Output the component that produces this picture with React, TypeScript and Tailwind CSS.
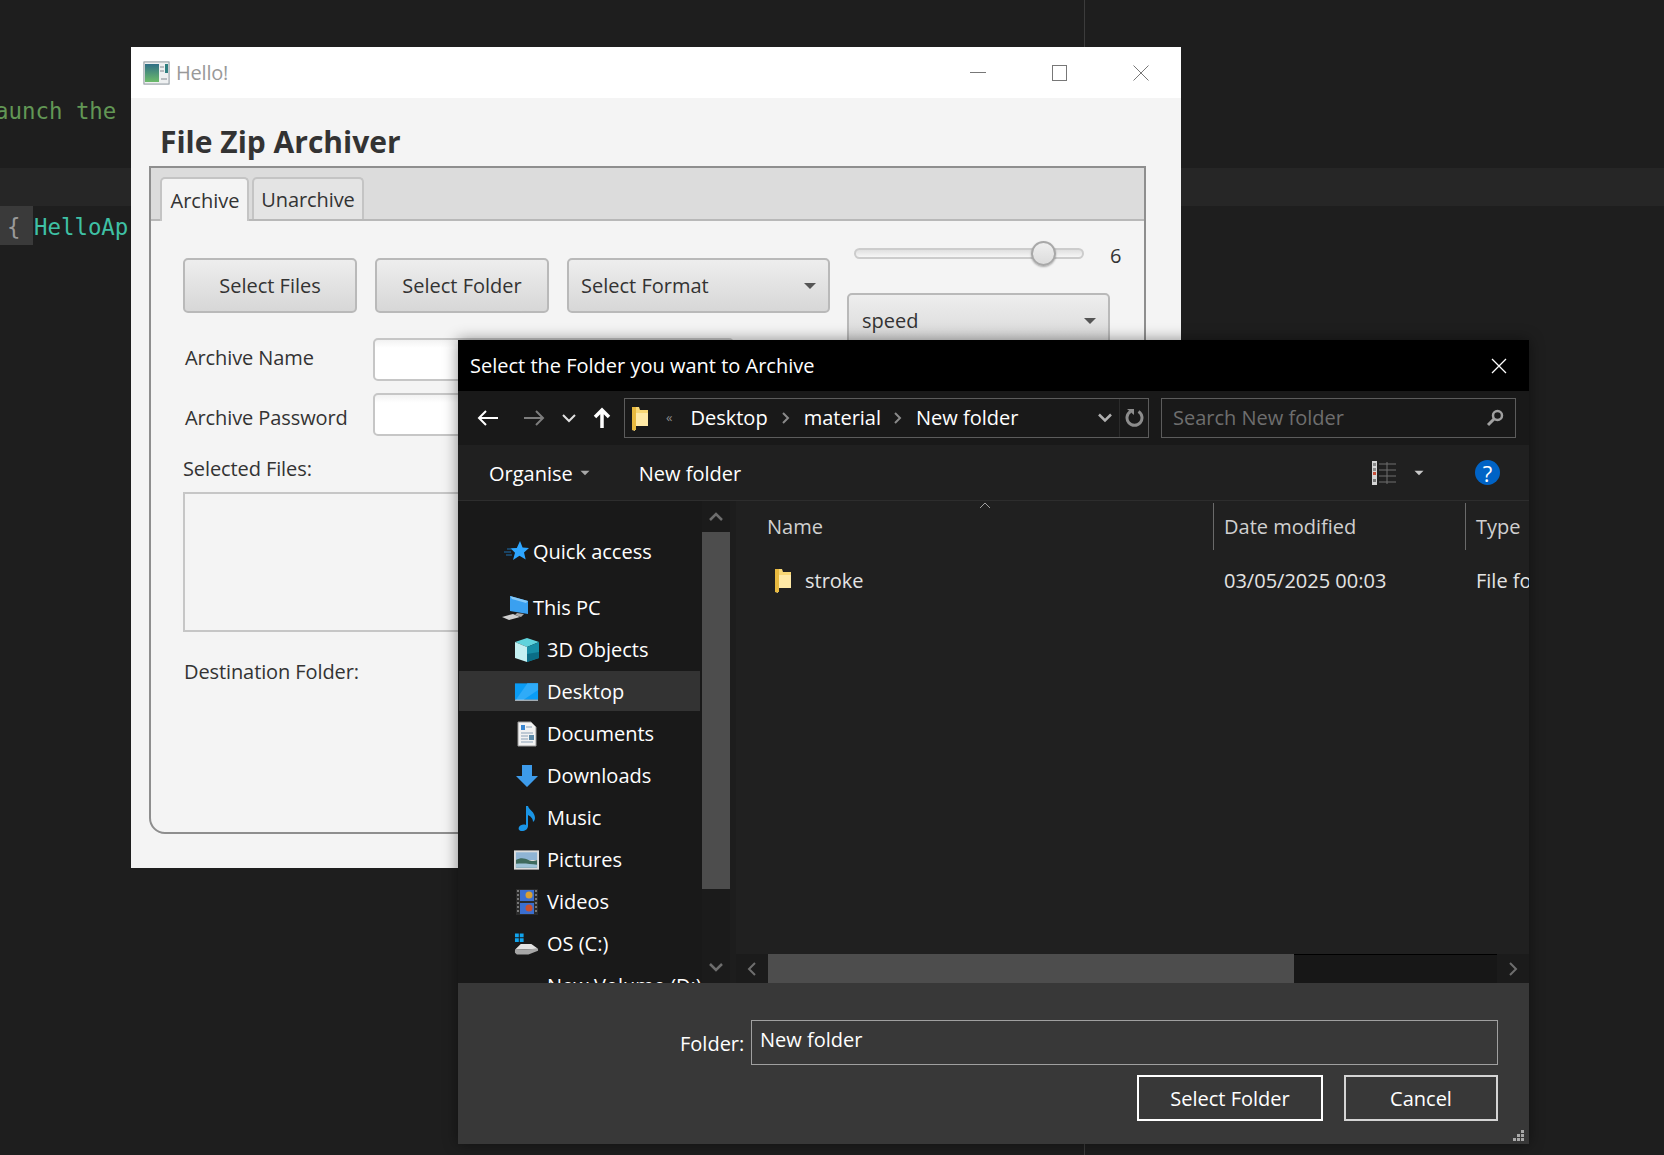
import React from 'react';

const FolderIcon = () => (
  <svg width="18" height="26" viewBox="0 0 18 26">
    <path d="M1 1h7l1 3h8v16H5l-1 1v4l-3-1z" fill="#f8d775" />
    <path d="M5 7h12v13H5z" fill="#ffe9a6" />
    <path d="M1 1h4v23H1z" fill="#e8b93f" />
  </svg>
);

const StarIcon = () => (
  <svg width="26" height="24" viewBox="0 0 26 24">
    <path d="M17 1l2.600 6.600 6.400.4-5 4.600 1.700 7-6.200-3.800L10 20l2-7.200-4.500-4.600 6.300-.3z" fill="#2ea6ff" />
    <path d="M1 12h7M3 15h6M4 9h5" stroke="#1c6fae" strokeWidth="1" />
  </svg>
);

const PcIcon = () => (
  <svg width="28" height="26" viewBox="0 0 28 26">
    <path d="M9 1l18 5v13l-18-3z" fill="#3aa0f0" />
    <path d="M9 1l18 5-2 2-14-4z" fill="#86c9f8" />
    <path d="M1 22l11-3 7 3-11 3z" fill="#d0d0d0" />
    <path d="M16 18l7 1-3 3-6-2z" fill="#a8a8a8" />
  </svg>
);

const CubeIcon = () => (
  <svg width="26" height="26" viewBox="0 0 26 26">
    <path d="M13 1l12 4-12 5L1 5z" fill="#5fd3dc" />
    <path d="M1 5l12 5v15L1 21z" fill="#c4f0f2" />
    <path d="M25 5l-12 5v15l12-4z" fill="#178ea6" />
    <path d="M13 17l12-2v6l-12 4z" fill="#0b6d86" />
  </svg>
);

const DesktopIcon = () => (
  <svg width="26" height="20" viewBox="0 0 26 20">
    <path d="M1 1h24v17H1z" fill="#0a9cf5" />
    <path d="M14 1h11v7L10 18H2z" fill="#2fabf8" />
    <path d="M1 18h24v1H1z" fill="#dfeefb" />
  </svg>
);

const DocIcon = () => (
  <svg width="20" height="26" viewBox="0 0 20 26">
    <path d="M1 1h13l5 5v19H1z" fill="#f2f2f2" stroke="#9a9a9a" />
    <path d="M4 4h4v5H4z" fill="#3a86d0" />
    <path d="M9 6h6M4 12h12M4 15h7M4 18h7M4 21h12" stroke="#8aa0b6" />
    <path d="M12 14h5v5h-5z" fill="#5b89a8" />
  </svg>
);

const DownloadIcon = () => (
  <svg width="24" height="24" viewBox="0 0 24 24">
    <path d="M7 1h10v11h6L12 23 1 12h6z" fill="#3d9bea" />
  </svg>
);

const MusicIcon = () => (
  <svg width="18" height="26" viewBox="0 0 18 26">
    <path d="M8 1h2c1 4 7 6 7 12 0 2-1 3-2 4 0-4-3-6-5-7v11c0 3-3 5-6 5-3 0-4-2-3-4 1-2 4-3 7-2z" fill="#1a95e6" />
  </svg>
);

const PictureIcon = () => (
  <svg width="26" height="20" viewBox="0 0 26 20">
    <path d="M0 0h26v20H0z" fill="#dcdcdc" />
    <path d="M2 2h22v8H2z" fill="#8fb4d4" />
    <path d="M2 10c5-3 9-2 13 0s6 1 9 0v8H2z" fill="#3e6a5c" />
    <path d="M2 14c8-1 14 0 22 1v3H2z" fill="#9ec3d8" />
  </svg>
);

const VideoIcon = () => (
  <svg width="22" height="26" viewBox="0 0 22 26">
    <path d="M0 0h22v26H0z" fill="#2b2b2b" />
    <path d="M4 1h14v11H4z" fill="#3b6fd0" />
    <path d="M4 14h14v11H4z" fill="#3b6fd0" />
    <circle cx="13" cy="6" r="3.500" fill="#d9a032" />
    <circle cx="13" cy="19" r="3.500" fill="#c9502f" />
    <path d="M1 2h2M1 6h2M1 10h2M1 14h2M1 18h2M1 22h2M19 2h2M19 6h2M19 10h2M19 14h2M19 18h2M19 22h2" stroke="#777" strokeWidth="2" />
  </svg>
);

const DriveIcon = () => (
  <svg width="26" height="24" viewBox="0 0 26 24">
    <path d="M1 1h4v4H1zM6 1h4v4H6zM1 6h4v4H1zM6 6h4v4H6z" fill="#10a4ee" />
    <path d="M1 18l6-6h11l7 5z" fill="#e2e2e2" />
    <path d="M1 18l24-1v2l-10 4H3l-2-2z" fill="#a6a6a6" />
  </svg>
);

const WindowIcon = () => (
  <svg width="27" height="24" viewBox="0 0 27 24">
    <path d="M0 0h27v24H0z" fill="#d9dde0" />
    <path d="M1 1h25v22H1z" fill="#eef0f1" stroke="#9ba3a8" />
    <defs>
      <linearGradient id="winfill" x1="0" y1="0" x2="0" y2="1">
        <stop offset="0" stopColor="#2f6f86" />
        <stop offset="1" stopColor="#6dbb6a" />
      </linearGradient>
    </defs>
    <path d="M2 3h14v18H2z" fill="url(#winfill)" />
    <path d="M22 3h3v9h-3z" fill="#2f7f80" />
    <path d="M17 6h4M17 10h4M18 18h6" stroke="#b8bcc0" strokeWidth="2" />
  </svg>
);

const Caret = ({ className }: { className: string }) => (
  <div className={`w-0 h-0 border-x-[6px] border-x-transparent border-t-[6px] ${className}`} />
);

const sidebarItems = [
  { label: 'Desktop', icon: <DesktopIcon />, active: true },
  { label: 'Documents', icon: <DocIcon /> },
  { label: 'Downloads', icon: <DownloadIcon /> },
  { label: 'Music', icon: <MusicIcon /> },
  { label: 'Pictures', icon: <PictureIcon /> },
  { label: 'Videos', icon: <VideoIcon /> },
  { label: 'OS (C:)', icon: <DriveIcon /> },
];

const fxButton =
  'h-[55px] pt-[1px] flex items-center rounded-[5px] border-2 border-[#b9b9b9] bg-linear-to-b from-[#eeeeee] to-[#d7d7d7] text-[20px] text-[#333333]';

const fxInput = 'h-[43px] w-[361px] rounded-[5px] border-2 border-[#c6c6c6] bg-linear-to-b from-[#f2f2f2] to-white to-20%';

const ArchiverWindow = () => (
  <div className="absolute left-[131px] top-[47px] w-[1050px] h-[821px] flex flex-col bg-[#f4f4f4] text-[#333333]">
    <div className="h-[51px] shrink-0 bg-white flex items-center pl-[12px]">
      <WindowIcon />
      <span className="ml-[6px] pt-[1px] text-[20px] tracking-[-0.2px] text-[#999999]">Hello!</span>
      <div className="ml-auto flex items-center mr-[32px] gap-[66px]">
        <div className="w-[16px] h-px bg-[#777777]" />
        <div className="w-[15px] h-[16px] border border-[#777777]" />
        <svg width="16" height="16" viewBox="0 0 16 16">
          <path d="M.5.5l15 15M15.500.5l-15 15" stroke="#777777" strokeWidth="1" />
        </svg>
      </div>
    </div>
    <h1 className="ml-[29px] mt-[24px] h-[44px] leading-[40px] text-[30px] font-bold text-[#333333]">
      File Zip Archiver
    </h1>
    <div className="ml-[18px] w-[997px] h-[668px] border-2 border-[#8e8e8e] rounded-bl-[16px] overflow-hidden">
      <div className="h-[53px] bg-[#dcdcdc] border-b-2 border-[#b8b8b8] flex items-end pl-[9px] gap-[3px]">
        <div className="w-[89px] h-[44px] -mb-[2px] pt-[2px] bg-[#f4f4f4] border-2 border-b-0 border-[#c4c4c4] rounded-t-[5px] flex items-center justify-center text-[20px]">
          <span className="ml-[1px]">Archive</span>
        </div>
        <div className="w-[112px] h-[42px] pt-[2px] bg-[#e4e4e4] border-2 border-b-0 border-[#c4c4c4] rounded-t-[5px] flex items-center justify-center text-[20px] tracking-[-0.1px]">
          Unarchive
        </div>
      </div>
      <div className="h-[117px] flex items-start">
        <div className="mt-[37px] ml-[32px] flex gap-[18px]">
          <div className={`${fxButton} w-[174px] justify-center`}>Select Files</div>
          <div className={`${fxButton} w-[174px] justify-center`}>Select Folder</div>
          <div className={`${fxButton} w-[263px] justify-between pl-[12px] pr-[12px]`}>
            <span>Select Format</span>
            <Caret className="border-t-[#555555]" />
          </div>
        </div>
        <div className="ml-[17px] mt-[18px] w-[278px]">
          <div className="flex items-center h-[36px]">
            <div className="relative -mt-[8px] ml-[7px] w-[230px] h-[11px] rounded-full border-2 border-[#cccccc] bg-linear-to-b from-[#e0e0e0] to-[#f6f6f6]">
              <div className="absolute left-[175px] -top-[9px] w-[25px] h-[25px] rounded-full border-2 border-[#a8a8a8] bg-linear-to-b from-[#efefef] to-[#dcdcdc] shadow-[0_1px_2px_rgba(0,0,0,0.3)]" />
            </div>
            <span className="ml-[26px] -mt-[2px] text-[20px]">6</span>
          </div>
          <div className={`${fxButton} w-[263px] justify-between pl-[13px] pr-[12px] mt-[18px]`}>
            <span>speed</span>
            <Caret className="border-t-[#555555]" />
          </div>
        </div>
      </div>
      <div className="flex items-center h-[43px] pl-[34px] text-[20px] tracking-[-0.1px]">
        <span className="w-[188px] pb-[4px]">Archive Name</span>
        <div className={fxInput} />
      </div>
      <div className="flex items-center h-[43px] mt-[12px] pl-[34px] text-[20px] tracking-[-0.1px]">
        <span className="w-[188px] pt-[6px]">Archive Password</span>
        <div className={fxInput} />
      </div>
      <div className="ml-[32px] mt-[18px] h-[38px] text-[20px] tracking-[-0.1px]">Selected Files:</div>
      <div className="ml-[32px] w-[780px] h-[140px] border-2 border-[#c6c6c6]" />
      <div className="ml-[33px] mt-[25px] text-[20px] tracking-[-0.1px]">Destination Folder:</div>
    </div>
  </div>
);

const FolderDialog = () => (
  <div className="absolute left-[458px] top-[340px] w-[1071px] h-[804px] flex flex-col overflow-hidden bg-[#202020] text-white text-[20px] shadow-[0_0_14px_rgba(0,0,0,0.45)]">
    <div className="h-[51px] shrink-0 bg-black flex items-center pl-[12px] pr-[22px]">
      <span>Select the Folder you want to Archive</span>
      <svg className="ml-auto" width="16" height="16" viewBox="0 0 16 16">
        <path d="M1 1l14 14M15 1L1 15" stroke="#ffffff" strokeWidth="1.300" />
      </svg>
    </div>
    <div className="h-[54px] shrink-0 bg-[#191919] flex items-center">
      <svg className="ml-[19px]" width="22" height="18" viewBox="0 0 22 18">
        <path d="M21 9H2M9 2L2 9l7 7" fill="none" stroke="#ffffff" strokeWidth="2" />
      </svg>
      <svg className="ml-[24px]" width="22" height="18" viewBox="0 0 22 18">
        <path d="M1 9h19M13 2l7 7-7 7" fill="none" stroke="#7d7d7d" strokeWidth="2" />
      </svg>
      <svg className="ml-[17px]" width="14" height="10" viewBox="0 0 14 10">
        <path d="M1 2l6 6 6-6" fill="none" stroke="#e0e0e0" strokeWidth="2" />
      </svg>
      <svg className="ml-[17px]" width="18" height="22" viewBox="0 0 18 22">
        <path d="M9 21V3M2 10l7-7 7 7" fill="none" stroke="#ffffff" strokeWidth="3.500" />
      </svg>
      <div className="ml-[13px] w-[525px] h-[40px] border border-[#5c5c5c] flex items-center">
        <div className="ml-[6px] mt-[1px] flex"><FolderIcon /></div>
        <span className="ml-[17px] text-[13px] text-[#8a8a8a]">«</span>
        <span className="ml-[18px]">Desktop</span>
        <svg className="ml-[14px]" width="8" height="12" viewBox="0 0 8 12">
          <path d="M1 1l5 5-5 5" fill="none" stroke="#8a8a8a" strokeWidth="2" />
        </svg>
        <span className="ml-[14px]">material</span>
        <svg className="ml-[13px]" width="8" height="12" viewBox="0 0 8 12">
          <path d="M1 1l5 5-5 5" fill="none" stroke="#8a8a8a" strokeWidth="2" />
        </svg>
        <span className="ml-[14px]">New folder</span>
        <svg className="ml-auto" width="14" height="10" viewBox="0 0 14 10">
          <path d="M1 1.500l6 6 6-6" fill="none" stroke="#b0b0b0" strokeWidth="2.500" />
        </svg>
        <div className="ml-[7px] w-px h-full bg-[#2b2b2b]" />
        <svg className="ml-[5px] mr-[4px]" width="19" height="20" viewBox="0 0 19 20">
          <path d="M5.500 3.500a7.500 7.500 0 1 0 8 0" fill="none" stroke="#8c8c8c" strokeWidth="3" />
          <path d="M2 1h7v6z" fill="#8c8c8c" />
        </svg>
      </div>
      <div className="ml-[12px] w-[355px] h-[40px] border border-[#5c5c5c] flex items-center pl-[11px] pr-[11px] text-[#6e6e6e]">
        <span>Search New folder</span>
        <svg className="ml-auto" width="18" height="18" viewBox="0 0 18 18">
          <circle cx="11.500" cy="6.500" r="4.500" fill="none" stroke="#a0a0a0" strokeWidth="2.500" />
          <path d="M8 10l-6 6" stroke="#a0a0a0" strokeWidth="3" />
        </svg>
      </div>
    </div>
    <div className="h-[56px] shrink-0 bg-[#202020] border-b border-[#2d2d2d] flex items-center">
      <span className="ml-[31px] pt-[2px]">Organise</span>
      <Caret className="ml-[6px] scale-75 border-t-[#a8a8a8]" />
      <span className="ml-[48px] pt-[2px]">New folder</span>
      <svg className="ml-auto" width="25" height="24" viewBox="0 0 25 24">
        <path d="M0 0h5v24H0z" fill="#d5d5d5" />
        <path d="M1 2h3v3H1zM1 7h3v3H1z" fill="#8a8a8a" />
        <path d="M1 11h3v3H1z" fill="#c8503a" />
        <path d="M1 18h3v3H1z" fill="#777777" />
        <path d="M7 3h17M7 9h17M7 15h17M7 21h17M15 1v22" stroke="#6f6f6f" strokeWidth="1" />
      </svg>
      <Caret className="ml-[16px] scale-75 border-t-[#c8c8c8]" />
      <div className="ml-[50px] mr-[29px] w-[25px] h-[25px] rounded-full bg-[#0063c6] flex items-center justify-center text-[22px] leading-none">
        ?
      </div>
    </div>
    <div className="flex-1 min-h-0 flex">
      <div className="w-[272px] shrink-0 bg-[#191919] flex overflow-hidden">
        <div className="w-[242px] shrink-0 mr-[2px] pt-[30px] pl-[1px]">
          <div className="h-[40px] pt-[2px] flex items-center pl-[45px]">
            <div className="w-[30px] -ml-[1px] flex"><StarIcon /></div>
            <span>Quick access</span>
          </div>
          <div className="mt-[16px] h-[40px] pt-[2px] flex items-center pl-[42px]">
            <div className="w-[32px] flex"><PcIcon /></div>
            <span>This PC</span>
          </div>
          <div className="mt-[2px] h-[40px] pt-[2px] flex items-center pl-[55px]">
            <div className="w-[33px] flex"><CubeIcon /></div>
            <span>3D Objects</span>
          </div>
          {sidebarItems.map((item) => (
            <div
              key={item.label}
              className={`mt-[2px] h-[40px] pt-[2px] flex items-center pl-[55px] ${item.active ? 'bg-[#333333]' : ''}`}
            >
              <div className="w-[33px] flex justify-center pr-[8px]">{item.icon}</div>
              <span>{item.label}</span>
            </div>
          ))}
          <div className="mt-[2px] h-[40px] pt-[2px] flex items-center pl-[88px] whitespace-nowrap">New Volume (D:)</div>
        </div>
        <div className="w-[28px] shrink-0 flex flex-col items-center bg-[#1b1b1b]">
          <svg className="mt-[11px]" width="14" height="10" viewBox="0 0 14 10">
            <path d="M1 8l6-6 6 6" fill="none" stroke="#6e6e6e" strokeWidth="2.500" />
          </svg>
          <div className="mt-[10px] w-full h-[357px] bg-[#4d4d4d]" />
          <svg className="mt-[73px]" width="14" height="10" viewBox="0 0 14 10">
            <path d="M1 2l6 6 6-6" fill="none" stroke="#6e6e6e" strokeWidth="2.500" />
          </svg>
        </div>
      </div>
      <div className="w-[6px] shrink-0 bg-[#1d1d1d]" />
      <div className="flex-1 min-w-0 flex flex-col overflow-hidden">
        <div className="flex-1 min-h-0 text-[#e4e4e4]">
          <div className="relative h-[49px] pt-[2px] flex text-[#d0d0d0]">
            <svg className="absolute left-[243px] top-[1px]" width="12" height="7" viewBox="0 0 12 7">
              <path d="M1 6l5-5 5 5" fill="none" stroke="#a0a0a0" strokeWidth="1" />
            </svg>
            <div className="w-[478px] shrink-0 pl-[31px] flex items-center border-r border-[#6a6a6a]">Name</div>
            <div className="w-[252px] shrink-0 pl-[10px] flex items-center border-r border-[#6a6a6a]">Date modified</div>
            <div className="pl-[10px] flex items-center">Type</div>
          </div>
          <div className="mt-[16px] h-[29px] flex items-center whitespace-nowrap">
            <div className="w-[478px] shrink-0 pl-[38px] flex items-center">
              <FolderIcon />
              <span className="ml-[13px]">stroke</span>
            </div>
            <div className="w-[252px] shrink-0 pl-[10px]">03/05/2025 00:03</div>
            <div className="pl-[10px]">File folder</div>
          </div>
        </div>
        <div className="h-[29px] shrink-0 flex items-center bg-[#1b1b1b]">
          <svg className="ml-[11px]" width="10" height="14" viewBox="0 0 10 14">
            <path d="M8 1L2 7l6 6" fill="none" stroke="#6e6e6e" strokeWidth="2" />
          </svg>
          <div className="ml-[11px] w-[526px] h-full bg-[#4d4d4d]" />
          <div className="flex-1 h-full bg-[#171717] border-t border-black" />
          <svg className="mx-[11px]" width="10" height="14" viewBox="0 0 10 14">
            <path d="M2 1l6 6-6 6" fill="none" stroke="#6e6e6e" strokeWidth="2" />
          </svg>
        </div>
      </div>
    </div>
    <div className="relative h-[161px] shrink-0 bg-[#383838]">
      <div className="flex items-start pt-[37px] pr-[31px] pl-[222px]">
        <span className="mt-[9px] w-[71px]">Folder:</span>
        <div className="flex-1 h-[45px] border border-[#a0a0a0] pl-[8px] pt-[4px]">New folder</div>
      </div>
      <div className="flex justify-end gap-[21px] pr-[31px] mt-[10px]">
        <div className="w-[186px] h-[46px] pt-[2px] border-2 border-white flex items-center justify-center">Select Folder</div>
        <div className="w-[154px] h-[46px] pt-[2px] border-2 border-[#d4d4d4] flex items-center justify-center">Cancel</div>
      </div>
      <svg className="absolute right-[4px] bottom-[2px]" width="12" height="12" viewBox="0 0 12 12">
        <path d="M8 0h3v3H8zM4 4h3v3H4zM8 4h3v3H8zM0 8h3v3H0zM4 8h3v3H4zM8 8h3v3H8z" fill="#a8a8a8" />
      </svg>
    </div>
  </div>
);

export default function App() {
  return (
    <div className="relative w-[1664px] h-[1155px] overflow-hidden bg-[#1e1e1e] font-['Open_Sans','Noto_Sans',sans-serif]">
      {/* editor behind the windows */}
      <div className="absolute left-[1084px] top-0 w-px h-full bg-[#3c3c3c]" />
      <div className="absolute left-0 top-[168px] w-full h-[38px] bg-[#262626]" />
      <div className="absolute left-0 top-[206px] w-[33px] h-[39px] bg-[#3a3a3a]" />
      <div className="absolute -left-[5px] top-[97px] font-['DejaVu_Sans_Mono',monospace] text-[22.4px] leading-[28px] whitespace-pre text-[#629755]">
        aunch the
      </div>
      <div className="absolute left-[7px] top-[213px] font-['DejaVu_Sans_Mono',monospace] text-[22.4px] leading-[28px] whitespace-pre text-[#9a9a9a]">
        {'{ '}<span className="text-[#3fc1a5]">HelloAp</span>
      </div>
      <ArchiverWindow />
      <FolderDialog />
    </div>
  );
}
